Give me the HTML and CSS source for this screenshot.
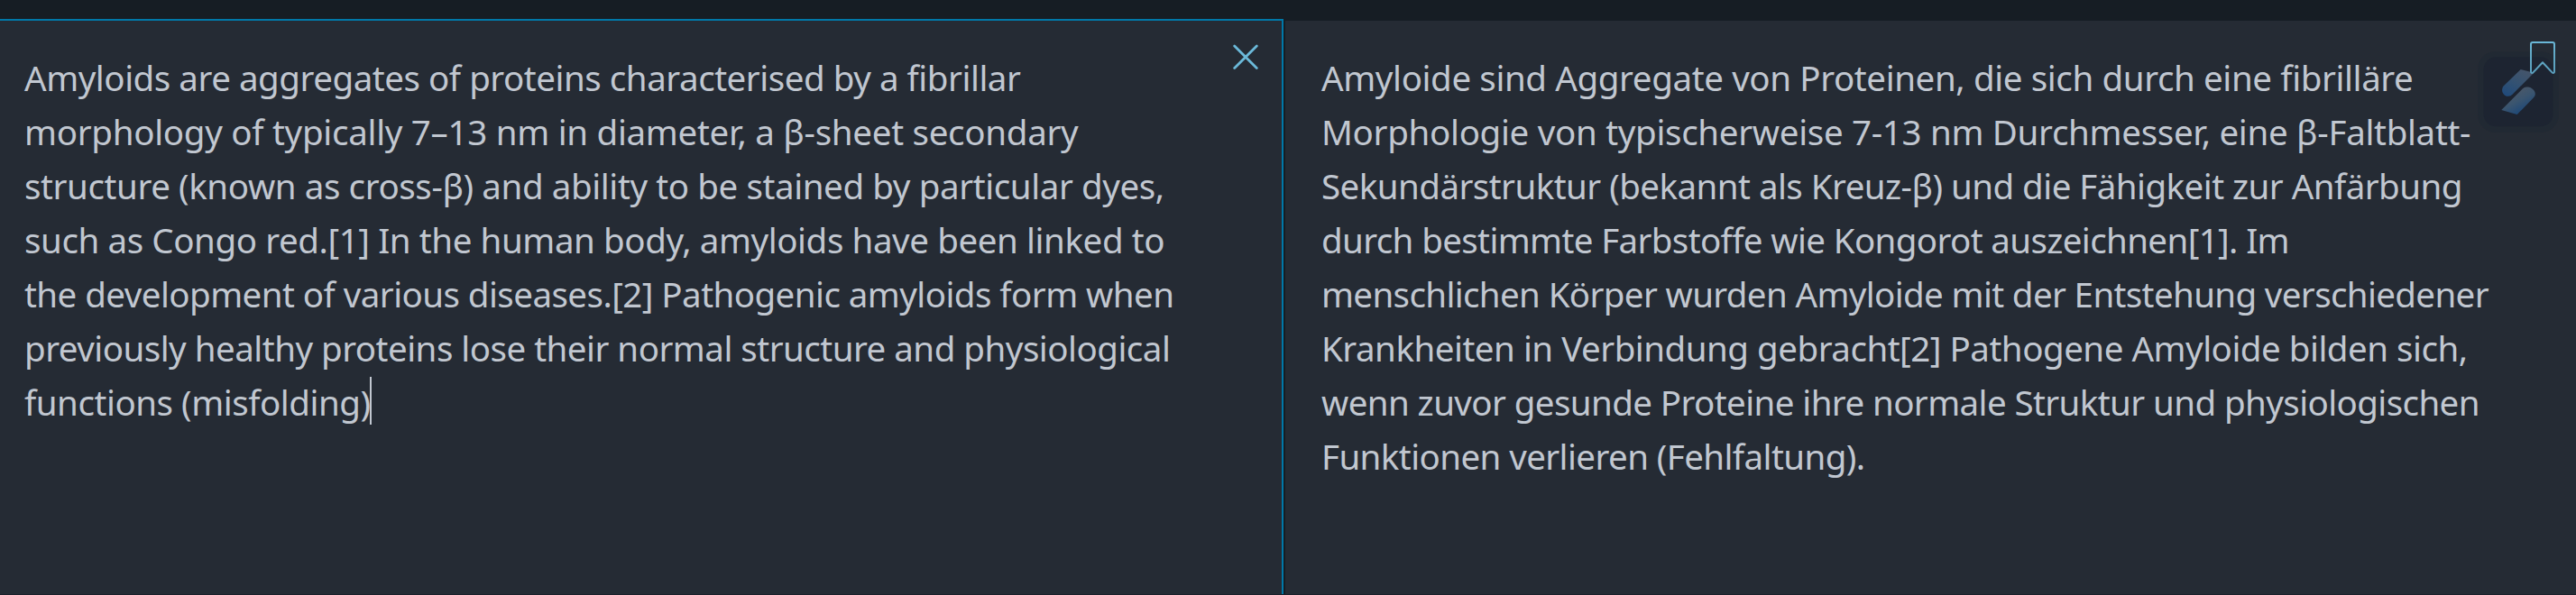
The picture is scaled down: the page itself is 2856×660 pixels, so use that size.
FILE: index.html
```html
<!DOCTYPE html>
<html lang="en">
<head>
<meta charset="utf-8">
<title>Translator</title>
<link rel="stylesheet" href="styles.css">
</head>
<body>
<main class="translator">
  <section class="panel source">
    <div class="text">
      <span class="line">Amyloids are aggregates of proteins characterised by a fibrillar</span>
      <span class="line">morphology of typically 7–13 nm in diameter, a β-sheet secondary</span>
      <span class="line">structure (known as cross-β) and ability to be stained by particular dyes,</span>
      <span class="line">such as Congo red.[1] In the human body, amyloids have been linked to</span>
      <span class="line">the development of various diseases.[2] Pathogenic amyloids form when</span>
      <span class="line">previously healthy proteins lose their normal structure and physiological</span>
      <span class="line">functions (misfolding)<i class="caret"></i></span>
    </div>
    <svg class="close" width="28" height="28" viewBox="0 0 28 28"><path d="M1.7 1.9 26.3 26.5M26.3 1.9 1.7 26.5"/></svg>
  </section>
  <section class="panel target" lang="de">
    <div class="text">
      <span class="line">Amyloide sind Aggregate von Proteinen, die sich durch eine fibrilläre</span>
      <span class="line">Morphologie von typischerweise 7-13 nm Durchmesser, eine β-Faltblatt-</span>
      <span class="line">Sekundärstruktur (bekannt als Kreuz-β) und die Fähigkeit zur Anfärbung</span>
      <span class="line">durch bestimmte Farbstoffe wie Kongorot auszeichnen[1]. Im</span>
      <span class="line">menschlichen Körper wurden Amyloide mit der Entstehung verschiedener</span>
      <span class="line">Krankheiten in Verbindung gebracht[2] Pathogene Amyloide bilden sich,</span>
      <span class="line">wenn zuvor gesunde Proteine ihre normale Struktur und physiologischen</span>
      <span class="line">Funktionen verlieren (Fehlfaltung).</span>
    </div>
    <svg class="bookmark" width="28" height="36" viewBox="0 0 28 36">
      <defs><linearGradient id="fade" gradientUnits="userSpaceOnUse" x1="0" y1="0" x2="0" y2="36"><stop offset="0" stop-color="#6bb9d9"/><stop offset=".4" stop-color="#62a9c6"/><stop offset="1" stop-color="#5a9fbd"/></linearGradient></defs>
      <path stroke="url(#fade)" d="M3 1H25Q27 1 27 3V33.2Q27 35.6 24.8 34.6L14 23.2 3.2 34.6Q1 35.6 1 33.2V3Q1 1 3 1Z"/>
    </svg>
    <svg class="badge" width="90" height="90" viewBox="0 0 90 90">
      <defs>
        <linearGradient id="upper" x1=".8" y1="0" x2=".2" y2="1"><stop offset="0" stop-color="#46556a"/><stop offset=".5" stop-color="#355271"/><stop offset="1" stop-color="#214b7b"/></linearGradient>
        <linearGradient id="lower" x1=".3" y1=".2" x2=".7" y2=".8"><stop offset="0" stop-color="#4a5869"/><stop offset=".5" stop-color="#3b556f"/><stop offset="1" stop-color="#214a77"/></linearGradient>
      </defs>
      <rect width="90" height="90" rx="20" fill="#1c2331" opacity=".3"/>
      <rect x="6.5" y="6.3" width="77" height="77" rx="14" fill="#1c2331" opacity=".88"/>
      <path fill="url(#upper)" d="M47.7 20 62.3 23.7 38.5 47.7Q36.5 50 33.5 49.8C28 49.3 25 43 28.8 38.3Z"/>
      <path fill="url(#lower)" d="M50 41.2Q52 39 55.5 39.5C62 40 66.500 47 62 51.300L43.700 70 26.300 65Z"/>
    </svg>
  </section>
</main>
</body>
</html>
```
FILE: styles.css
```css
* { box-sizing: border-box; }
body {
  margin: 0;
  background: #161d24;
  color: #c1c7d0;
  font: 38.5px/60px "Segoe UI", "Noto Sans", sans-serif;
}
.translator {
  display: grid;
  grid-template-columns: 1423px 1fr;
  column-gap: 2px;
  height: 660px;
  padding-top: 21px;
  border-bottom: 1px solid #1b212b;
  overflow: hidden;
}
.panel {
  position: relative;
  background: #252b34;
  padding: 33px 0 0 27px;
}
.source {
  border-top: 2px solid #0078a8;
  border-right: 2px solid #0078a8;
}
.target {
  margin-top: 2px;
  padding-left: 40px;
}
.line {
  display: block;
  height: 60px;
  white-space: nowrap;
}
.source .line:nth-child(1) { letter-spacing: -.464px; }
.source .line:nth-child(2) { letter-spacing: -.289px; }
.source .line:nth-child(3) { letter-spacing: -.4px; }
.source .line:nth-child(4) { letter-spacing: -.41px; }
.source .line:nth-child(5) { letter-spacing: -.55px; }
.source .line:nth-child(6) { letter-spacing: -.51px; }
.source .line:nth-child(7) { letter-spacing: -.46px; }
.target .line:nth-child(1) { letter-spacing: -.384px; }
.target .line:nth-child(2) { letter-spacing: -.31px; }
.target .line:nth-child(3) { letter-spacing: -.54px; }
.target .line:nth-child(4) { letter-spacing: -.624px; }
.target .line:nth-child(5) { letter-spacing: -.634px; }
.target .line:nth-child(6) { letter-spacing: -.49px; }
.target .line:nth-child(7) { letter-spacing: -.59px; }
.target .line:nth-child(8) { letter-spacing: -.58px; }
.caret {
  display: inline-block;
  width: 2px;
  height: 53px;
  margin: -10px 0 -10px -1px;
  vertical-align: 0;
  background: #c1c7d0;
}
.close, .bookmark {
  position: absolute;
  fill: none;
  stroke-linecap: round;
  stroke-linejoin: round;
}
.close {
  top: 26px;
  right: 26px;
  stroke: #6bb9d9;
  stroke-width: 2.8;
}
.bookmark {
  top: 23px;
  right: 23px;
  stroke-width: 2;
  z-index: 1;
}
.badge {
  position: absolute;
  top: 34px;
  right: 19px;
}
```
